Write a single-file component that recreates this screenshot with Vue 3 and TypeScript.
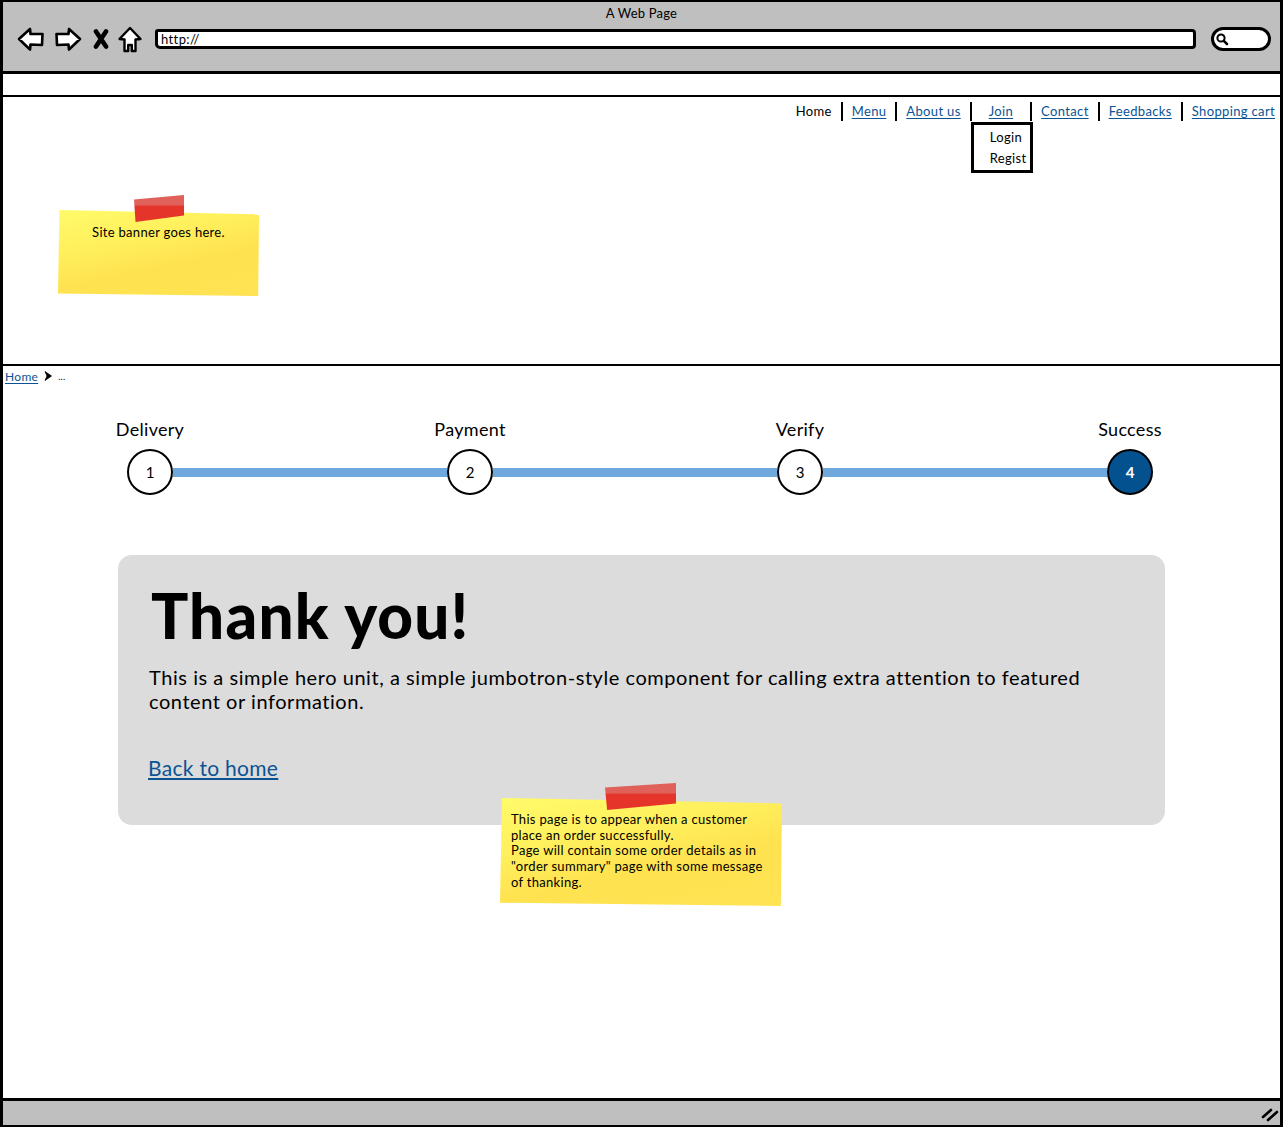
<template>
  <div class="window">
    <div class="chrome">
      <div class="chrome-title">A Web Page</div>
      <div class="chrome-row">
        <div class="chrome-icons">
          <svg class="ic" width="28" height="26" viewBox="0 0 28 26">
            <path d="M2 13 L13 3 L13.5 8 L25.5 8 L25 19 L13.5 18.5 L13 23.5 Z" fill="#fff" stroke="#000" stroke-width="2.6" stroke-linejoin="round" />
          </svg>
          <svg class="ic" width="28" height="26" viewBox="0 0 28 26">
            <path d="M26 13 L15 3 L14.5 8 L2.5 8 L3 19 L14.5 18.5 L15 23.5 Z" fill="#fff" stroke="#000" stroke-width="2.6" stroke-linejoin="round" />
          </svg>
          <svg class="ic ic-x" width="16" height="20" viewBox="0 0 16 20">
            <path d="M3 2.5 L13 17.5 M13 2.5 L3 17.5" fill="none" stroke="#000" stroke-width="4.6" stroke-linecap="round" />
          </svg>
          <svg class="ic ic-home" width="24" height="27" viewBox="0 0 24 27">
            <path d="M12 2 L22.5 13 L17.5 13.5 L17.5 25 L13.8 25 L13.8 19 L10.2 19 L10.2 25 L6.5 25 L6.5 13.5 L1.5 13 Z" fill="#fff" stroke="#000" stroke-width="2.4" stroke-linejoin="round" />
          </svg>
        </div>
        <div class="address">http://</div>
        <div class="search">
          <svg width="14" height="14" viewBox="0 0 14 14">
            <circle cx="6" cy="6" r="3.6" fill="none" stroke="#000" stroke-width="2" />
            <path d="M8.8 8.8 L12 12" stroke="#000" stroke-width="2.6" stroke-linecap="round" />
          </svg>
        </div>
      </div>
    </div>
    <div class="tabstrip"></div>

    <header class="banner">
      <nav class="nav">
        <template v-for="(item, i) in navItems" :key="item.label">
          <span v-if="i > 0" class="nav-sep"></span>
          <div class="nav-item" :class="{ 'nav-join': item.label === 'Join' }">
            <span v-if="item.plain" class="nav-plain">{{ item.label }}</span>
            <a v-else class="link" href="#">{{ item.label }}</a>
            <div v-if="item.label === 'Join'" class="dropdown">
              <div>Login</div>
              <div>Regist</div>
            </div>
          </div>
        </template>
      </nav>
      <div class="note note-banner">
        <span class="tape tape-banner"></span>
        <p>Site banner goes here.</p>
      </div>
    </header>

    <div class="crumbs">
      <a class="link" href="#">Home</a>
      <svg width="8" height="10" viewBox="0 0 8 10"><path d="M1 0.5 L7.5 5 L1 9.5 L3 5 Z" fill="#000" stroke="#000" stroke-width="0.8" stroke-linejoin="round" /></svg>
      <span class="crumb-rest">...</span>
    </div>

    <main class="content">
      <div class="stepper">
        <template v-for="step in steps" :key="step.n">
          <div class="step">
            <div class="step-label">{{ step.label }}</div>
            <div class="step-dot" :class="{ 'step-active': step.n === 4 }">{{ step.n }}</div>
          </div>
          <div v-if="step.gap" class="step-line" :style="{ width: step.gap + 'px' }"></div>
        </template>
      </div>

      <section class="hero">
        <h1>Thank you!</h1>
        <p>This is a simple hero unit, a simple jumbotron-style component for calling extra attention to featured content or information.</p>
        <a class="link hero-link" href="#">Back to home</a>
      </section>

      <div class="note note-hero">
        <span class="tape tape-hero"></span>
        <p>This page is to appear when a customer<br />place an order successfully.<br />Page will contain some order details as in<br />"order summary" page with some message<br />of thanking.</p>
      </div>
    </main>

    <footer class="status">
      <svg width="18" height="14" viewBox="0 0 18 14">
        <path d="M2 9 L10 2 M7 12 L16 4" stroke="#000" stroke-width="2.6" stroke-linecap="round" />
      </svg>
    </footer>
  </div>
</template>

<script setup lang="ts">
const navItems = [
  { label: 'Home', plain: true },
  { label: 'Menu' },
  { label: 'About us' },
  { label: 'Join' },
  { label: 'Contact' },
  { label: 'Feedbacks' },
  { label: 'Shopping cart' },
]

const steps = [
  { n: 1, label: 'Delivery', gap: 274 },
  { n: 2, label: 'Payment', gap: 284 },
  { n: 3, label: 'Verify', gap: 284 },
  { n: 4, label: 'Success', gap: 0 },
]
</script>

<style scoped>
.window {
  box-sizing: border-box;
  width: 1283px;
  height: 1127px;
  display: flex;
  flex-direction: column;
  border: solid #000;
  border-width: 2px 3px;
  background: #fff;
  color: #000;
  font-family: "Lato", "Liberation Sans", sans-serif;
  overflow: hidden;
}
.link {
  color: #0b5394;
  text-decoration: underline;
  text-underline-offset: 2px;
}

.chrome {
  height: 72px;
  box-sizing: border-box;
  flex: none;
  background: #bfbfbf;
  border-bottom: 3px solid #000;
}
.chrome-title {
  text-align: center;
  font-size: 13px;
  line-height: 15px;
  padding: 4px 0 0;
  letter-spacing: 0.2px;
}
.chrome-row {
  display: flex;
  align-items: center;
  padding: 3px 0 0 14px;
  height: 30px;
}
.chrome-icons {
  display: flex;
  align-items: center;
  gap: 9px;
  width: 138px;
  flex: none;
}
.ic-x {
  margin-left: 2px;
}
.ic-home {
  margin-left: 0;
}
.address {
  box-sizing: border-box;
  width: 1041px;
  height: 20px;
  border: 3px solid #000;
  border-radius: 3px 4px 4px 5px;
  background: #fff;
  font-size: 13px;
  line-height: 14px;
  padding-left: 3px;
  letter-spacing: 0.4px;
}
.search {
  box-sizing: border-box;
  width: 60px;
  height: 24px;
  margin-left: 15px;
  border: 3px solid #000;
  border-radius: 12px;
  background: #fff;
  display: flex;
  align-items: center;
  padding-left: 1px;
}

.tabstrip {
  height: 21px;
  flex: none;
}

.banner {
  position: relative;
  flex: none;
  height: 271px;
  box-sizing: border-box;
  border-top: 2px solid #000;
  border-bottom: 2px solid #000;
}
.nav {
  display: flex;
  justify-content: flex-end;
  align-items: flex-start;
  padding: 5px 5px 0 0;
  font-size: 13px;
  line-height: 18px;
}
.nav-sep {
  width: 2px;
  height: 19px;
  background: #000;
  margin: 0 9px;
}
.nav-item {
  position: relative;
  letter-spacing: 0.35px;
}
.nav-join {
  padding: 0;
}
.nav-join .link {
  display: inline-block;
  padding: 0 8px;
  white-space: pre;
}
.dropdown {
  position: absolute;
  top: 20px;
  left: -10px;
  box-sizing: border-box;
  width: 62px;
  height: 51px;
  border: 3px solid #000;
  background: #fff;
  padding: 2px 0 0 16px;
  line-height: 21px;
  z-index: 2;
}

.note {
  position: absolute;
  z-index: 3;
  font-size: 13px;
  letter-spacing: 0.3px;
}
.note::before {
  content: "";
  position: absolute;
  inset: 0;
  background: linear-gradient(168deg, #fffb6b 0%, #ffef5c 35%, #ffe250 62%, #ffe352 100%);
  clip-path: polygon(0.7% 0, 100% 5%, 99.6% 100%, 0 97%);
}
.note p {
  position: relative;
  margin: 0;
}
.tape {
  position: absolute;
  z-index: 1;
  background: linear-gradient(180deg, #e0605a 0%, #e0605a 38%, #e5352b 40%, #e5352b 100%);
  clip-path: polygon(0 17%, 100% 0, 100% 76%, 3% 100%);
}
.note-banner {
  left: 55px;
  top: 113px;
  width: 201px;
  height: 86px;
  text-align: center;
}
.note-banner p {
  padding-top: 14px;
  line-height: 16px;
}
.tape-banner {
  left: 76px;
  top: -15px;
  width: 50px;
  height: 27px;
}
.note-hero {
  left: 497px;
  top: 412px;
  width: 282px;
  height: 108px;
}
.note-hero p {
  padding: 14px 0 0 11px;
  line-height: 15.7px;
}
.tape-hero {
  left: 105px;
  top: -15px;
  width: 71px;
  height: 27px;
}

.crumbs {
  flex: none;
  display: flex;
  align-items: center;
  gap: 6px;
  height: 20px;
  padding-left: 2px;
  font-size: 12px;
  letter-spacing: 0.3px;
}
.crumb-rest {
  font-size: 9px;
}

.content {
  position: relative;
  flex: 1;
  min-height: 0;
}
.stepper {
  display: flex;
  align-items: flex-end;
  padding: 32px 0 0 124px;
}
.step {
  width: 46px;
  display: flex;
  flex-direction: column;
  align-items: center;
  flex: none;
}
.step-label {
  font-size: 18px;
  line-height: 22px;
  white-space: nowrap;
  margin-bottom: 9px;
  letter-spacing: 0.3px;
}
.step-dot {
  box-sizing: border-box;
  width: 46px;
  height: 46px;
  border: 2px solid #000;
  border-radius: 50%;
  background: #fff;
  display: flex;
  align-items: center;
  justify-content: center;
  font-size: 15px;
  position: relative;
}
.step-active {
  background: #04518f;
  color: #fff;
  font-weight: 700;
}
.step-line {
  height: 9px;
  margin-bottom: 18px;
  flex: none;
  background: #6fa8dc;
}

.hero {
  box-sizing: border-box;
  width: 1047px;
  height: 270px;
  margin: 60px 0 0 115px;
  padding: 26px 30px 0 33px;
  background: #dcdcdc;
  border-radius: 14px;
}
.hero h1 {
  margin: 0;
  font-size: 62px;
  line-height: 68px;
  font-weight: 900;
  letter-spacing: 1.2px;
}
.hero p {
  margin: 16px 0 0 -2px;
  font-size: 20px;
  line-height: 24px;
  letter-spacing: 0.55px;
}
.hero-link {
  display: inline-block;
  margin: 42px 0 0 -3px;
  font-size: 21px;
  line-height: 26px;
  letter-spacing: 0.3px;
}

.status {
  flex: none;
  height: 27px;
  box-sizing: border-box;
  background: #bfbfbf;
  border-top: 3px solid #000;
  display: flex;
  justify-content: flex-end;
  align-items: center;
  padding: 4px 1px 0 0;
}
</style>
